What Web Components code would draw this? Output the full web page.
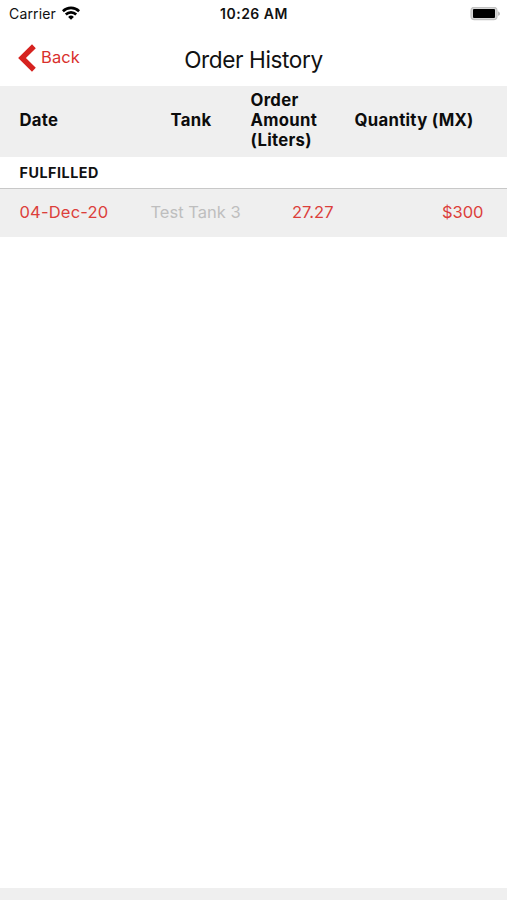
<!DOCTYPE html>
<html lang="en">
<head>
<meta charset="utf-8">
<title>Order History</title>
<style>
    html, body {
        height: 100%;
        margin: 0;
    }
    body {
        background-color: #fff;
        color: #111;
        font-family: Inter, "Liberation Sans", sans-serif;
    }
</style>
</head>
<body>
<order-history-screen></order-history-screen>

<script>
class StatusBar extends HTMLElement {
    constructor() {
        super();
        this.attachShadow({ mode: 'open' });
    }

    connectedCallback() {
        this.shadowRoot.innerHTML = `
            <style>
                :host {
                    display: grid;
                    grid-template-columns: 1fr auto 1fr;
                    align-items: center;
                    height: 28px;
                    padding: 0 6px 0 9px;
                    box-sizing: border-box;
                    font-size: 14px;
                    line-height: 28px;
                }
                .carrier {
                    display: flex;
                    align-items: center;
                    gap: 6px;
                    letter-spacing: 0.15px;
                }
                .time {
                    margin-right: 2px;
                    font-weight: 600;
                    letter-spacing: 0.5px;
                }
                .battery {
                    justify-self: end;
                }
                svg {
                    display: block;
                }
                .wifi {
                    margin-top: -2px;
                }
            </style>
            <div class="carrier">
                <span>${this.getAttribute('carrier')}</span>
                <svg class="wifi" width="18" height="14" viewBox="0 0 18 14" fill="none" stroke="#000" stroke-width="2.6">
                    <path d="M0.9 5.2a11.6 11.6 0 0 1 16.2 0"/>
                    <path d="M3.8 8.5a7.4 7.4 0 0 1 10.4 0"/>
                    <path d="M9 13.8L6.1 10.9a4.1 4.1 0 0 1 5.8 0z" fill="#000" stroke="none"/>
                </svg>
            </div>
            <span class="time">${this.getAttribute('time')}</span>
            <svg class="battery" width="31" height="14" viewBox="0 0 31 14">
                <rect x="1" y="0.3" width="26" height="12.4" rx="3.4" fill="#d8d8d8" stroke="#c2c2c2" stroke-width="1.2"/>
                <rect x="3" y="2" width="22" height="9" rx="1" fill="#000"/>
                <path d="M28.2 4.4v4.4c2.2-.7 2.2-3.7 0-4.4z" fill="#b0b0b0"/>
            </svg>
        `;
    }
}

class NavBar extends HTMLElement {
    constructor() {
        super();
        this.attachShadow({ mode: 'open' });
    }

    connectedCallback() {
        this.shadowRoot.innerHTML = `
            <style>
                :host {
                    display: grid;
                    grid-template-columns: 1fr auto 1fr;
                    height: 58px;
                    padding: 0 18px;
                    box-sizing: border-box;
                }
                .back {
                    display: flex;
                    align-items: center;
                    justify-self: start;
                    gap: 5px;
                    height: 58px;
                    padding: 0;
                    border: none;
                    background: none;
                    color: #d9302c;
                    font: inherit;
                    font-size: 16.5px;
                    letter-spacing: 0.1px;
                }
                .back svg {
                    margin-top: 1px;
                }
                .back span {
                    margin-bottom: 1px;
                }
                h1 {
                    margin: 0;
                    font-size: 22.6px;
                    font-weight: 400;
                    line-height: 64px;
                    letter-spacing: -0.4px;
                }
            </style>
            <button class="back">
                <svg width="18" height="28" viewBox="0 0 18 28">
                    <path d="M15.9 2.3L4 14l11.9 11.7" fill="none" stroke="#d6221f" stroke-width="5.4"/>
                </svg>
                <span>Back</span>
            </button>
            <h1><slot></slot></h1>
        `;
    }
}

class OrderHeader extends HTMLElement {
    constructor() {
        super();
        this.attachShadow({ mode: 'open' });
    }

    connectedCallback() {
        this.shadowRoot.innerHTML = `
            <style>
                :host {
                    display: grid;
                    grid-template-columns: 151px 80px 104px 1fr;
                    align-items: center;
                    height: 71px;
                    padding: 0 0 3px 19.5px;
                    box-sizing: border-box;
                    background-color: #efefef;
                    color: #0c0c0c;
                    font-size: 16.7px;
                    font-weight: 650;
                    line-height: 20.3px;
                    letter-spacing: 0.3px;
                }
                .amount {
                    width: 72px;
                }
            </style>
            <span>Date</span>
            <span>Tank</span>
            <span class="amount">Order Amount (Liters)</span>
            <span>Quantity (MX)</span>
        `;
    }
}

class OrderSection extends HTMLElement {
    constructor() {
        super();
        this.attachShadow({ mode: 'open' });
    }

    connectedCallback() {
        this.shadowRoot.innerHTML = `
            <style>
                :host {
                    display: block;
                }
                .label {
                    height: 32px;
                    padding-left: 19.5px;
                    box-sizing: border-box;
                    border-bottom: 1px solid #c8c8c8;
                    font-size: 14.3px;
                    font-weight: 700;
                    line-height: 31px;
                    letter-spacing: 0.55px;
                }
            </style>
            <div class="label">${this.getAttribute('label')}</div>
            <slot></slot>
        `;
    }
}

class OrderRow extends HTMLElement {
    constructor() {
        super();
        this.attachShadow({ mode: 'open' });
    }

    connectedCallback() {
        this.shadowRoot.innerHTML = `
            <style>
                :host {
                    display: grid;
                    grid-template-columns: 131px 90px 93px 150px;
                    height: 48px;
                    padding-left: 19.5px;
                    box-sizing: border-box;
                    background-color: #efefef;
                    color: #dc3f3b;
                    font-size: 16.5px;
                    line-height: 47px;
                    white-space: nowrap;
                }
                .date {
                    letter-spacing: 0.2px;
                }
                .tank {
                    color: #bebebe;
                }
                .amount, .price {
                    text-align: right;
                }
            </style>
            <span class="date">${this.getAttribute('date')}</span>
            <span class="tank">${this.getAttribute('tank')}</span>
            <span class="amount">${this.getAttribute('amount')}</span>
            <span class="price">${this.getAttribute('price')}</span>
        `;
    }
}

class OrderHistoryScreen extends HTMLElement {
    constructor() {
        super();
        this.attachShadow({ mode: 'open' });
    }

    connectedCallback() {
        this.shadowRoot.innerHTML = `
            <style>
                :host {
                    display: flex;
                    flex-direction: column;
                    height: 100%;
                }
                main {
                    flex: 1;
                }
                footer {
                    height: 12px;
                    background-color: #efefef;
                }
            </style>
            <status-bar carrier="Carrier" time="10:26 AM"></status-bar>
            <nav-bar>Order History</nav-bar>
            <main>
                <order-header></order-header>
                <order-section label="FULFILLED">
                    <order-row date="04-Dec-20" tank="Test Tank 3" amount="27.27" price="$300"></order-row>
                </order-section>
            </main>
            <footer></footer>
        `;
    }
}

customElements.define('status-bar', StatusBar);
customElements.define('nav-bar', NavBar);
customElements.define('order-header', OrderHeader);
customElements.define('order-section', OrderSection);
customElements.define('order-row', OrderRow);
customElements.define('order-history-screen', OrderHistoryScreen);
</script>
</body>
</html>
